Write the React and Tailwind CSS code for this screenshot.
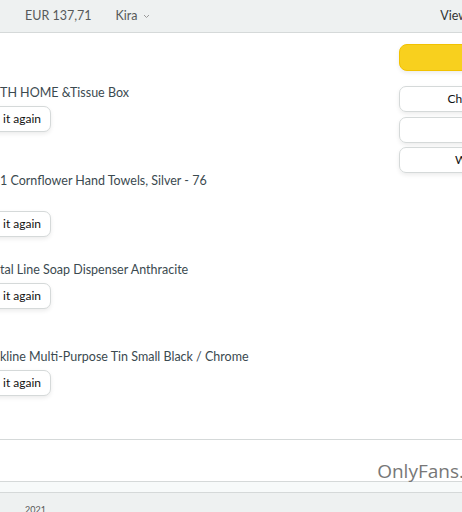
export default function App() {
  const items = [
    { title: "TH HOME &Tissue Box", mt: "mt-0", gap: "mt-[5px]" },
    { title: "1 Cornflower Hand Towels, Silver - 76", mt: "mt-[41px]", gap: "mt-[22px]" },
    { title: "tal Line Soap Dispenser Anthracite", mt: "mt-[25px]", gap: "mt-[5px]" },
    { title: "kline Multi-Purpose Tin Small Black / Chrome", mt: "mt-[40px]", gap: "mt-[5px]" },
  ];

  return (
    <div className="w-[462px] h-[512px] overflow-hidden bg-white text-[#333] font-['Lato',sans-serif]">
      {/* top bar */}
      <div className="h-[33px] bg-[#eef1f1] border-b border-[#d5d9d9] flex items-center text-[12.5px] text-[#565959]">
        <span className="ml-[25px]">EUR 137,71</span>
        <span className="ml-[24px] flex items-center gap-[6px]">
          Kira
          <svg width="7" height="5" viewBox="0 0 7 5" className="mt-[1px]">
            <path d="M1 1l2.5 2.5L6 1" fill="none" stroke="#999" strokeWidth="1" />
          </svg>
        </span>
        <span className="ml-auto mr-[-6px] text-[#333]">View</span>
      </div>

      <div className="flex h-[407px] border-b border-[#d5d9d9]">
        {/* items */}
        <div className="flex-1 pt-[52px]">
          {items.map((it) => (
            <div key={it.title} className={it.mt}>
              <div className="h-[16px] leading-[16px] text-[12.5px] text-[#3b4a50] whitespace-nowrap">
                {it.title}
              </div>
              <button
                className={`${it.gap} -ml-[30px] h-[26px] pl-[32px] pr-[9px] rounded-[7px] border border-[#d5d9d9] bg-white shadow-[0_2px_4px_rgba(0,0,0,0.08)] text-[12px] text-[#111] flex items-center`}
              >
                it again
              </button>
            </div>
          ))}
        </div>

        {/* right actions */}
        <div className="w-[180px] shrink-0 pt-[11px] mr-[-117px] flex flex-col">
          <div className="h-[27px] rounded-[8px] bg-[#f8d01e] border border-[#f2c200] shadow-[0_2px_4px_rgba(0,0,0,0.08)]" />
          <div className="mt-[15px] h-[26px] rounded-[7px] border border-[#d5d9d9] shadow-[0_2px_4px_rgba(0,0,0,0.08)] flex items-center justify-center text-[12px] text-[#111]">
            Change address
          </div>
          <div className="mt-[5px] h-[26px] rounded-[7px] border border-[#d5d9d9] shadow-[0_2px_4px_rgba(0,0,0,0.08)] flex items-center justify-center text-[12px] text-[#111]">
            Help
          </div>
          <div className="mt-[4px] h-[26px] rounded-[7px] border border-[#d5d9d9] shadow-[0_2px_4px_rgba(0,0,0,0.08)] flex items-center justify-center text-[12px] text-[#111]">
            Write review
          </div>
        </div>
      </div>

      {/* footer area */}
      <div className="h-[42px] flex items-end justify-end border-b border-[#d5d9d9]">
        <span className="mr-[-2px] mb-[-4px] text-[19px] text-[#777] font-['Open_Sans',sans-serif]">OnlyFans.</span>
      </div>
      <div className="h-[11px] bg-[#f7fafa] border-b border-[#d5d9d9]" />
      <div className="h-full bg-[#eef1f1] pl-[25px] pt-[10px] text-[9px] text-[#555]">2021</div>
    </div>
  );
}
